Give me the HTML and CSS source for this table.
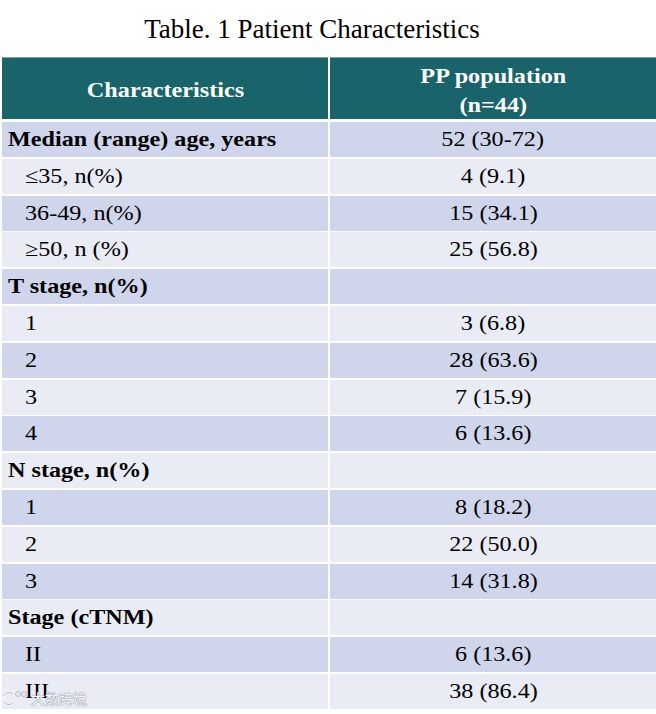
FILE: index.html
```html
<!DOCTYPE html>
<html lang="en">
<head>
<meta charset="utf-8">
<title>Table. 1 Patient Characteristics</title>
<link rel="stylesheet" href="styles.css">
</head>
<body>
<div class="page">
  <h1 class="title">Table. 1 Patient Characteristics</h1>
  <div class="table">
    <div class="head">
      <div class="hcell"><span class="hx">Characteristics</span></div>
      <div class="hcell"><span class="hx">PP population<br>(n=44)</span></div>
    </div>
    <div class="rows">
      <div class="cell dark lab bold"><span class="tx">Median (range) age, years</span></div>
      <div class="cell dark val"><span class="tx">52 (30-72)</span></div>

      <div class="cell light lab sub"><span class="tx">≤35, n(%)</span></div>
      <div class="cell light val"><span class="tx">4 (9.1)</span></div>

      <div class="cell dark lab sub"><span class="tx">36-49, n(%)</span></div>
      <div class="cell dark val"><span class="tx">15 (34.1)</span></div>

      <div class="cell light lab sub"><span class="tx">≥50, n (%)</span></div>
      <div class="cell light val"><span class="tx">25 (56.8)</span></div>

      <div class="cell dark lab bold"><span class="tx">T stage, n(%)</span></div>
      <div class="cell dark val"></div>

      <div class="cell light lab sub"><span class="tx">1</span></div>
      <div class="cell light val"><span class="tx">3 (6.8)</span></div>

      <div class="cell dark lab sub"><span class="tx">2</span></div>
      <div class="cell dark val"><span class="tx">28 (63.6)</span></div>

      <div class="cell light lab sub"><span class="tx">3</span></div>
      <div class="cell light val"><span class="tx">7 (15.9)</span></div>

      <div class="cell dark lab sub"><span class="tx">4</span></div>
      <div class="cell dark val"><span class="tx">6 (13.6)</span></div>

      <div class="cell light lab bold"><span class="tx">N stage, n(%)</span></div>
      <div class="cell light val"></div>

      <div class="cell dark lab sub"><span class="tx">1</span></div>
      <div class="cell dark val"><span class="tx">8 (18.2)</span></div>

      <div class="cell light lab sub"><span class="tx">2</span></div>
      <div class="cell light val"><span class="tx">22 (50.0)</span></div>

      <div class="cell dark lab sub"><span class="tx">3</span></div>
      <div class="cell dark val"><span class="tx">14 (31.8)</span></div>

      <div class="cell light lab bold"><span class="tx">Stage (cTNM)</span></div>
      <div class="cell light val"></div>

      <div class="cell dark lab sub"><span class="tx">II</span></div>
      <div class="cell dark val"><span class="tx">6 (13.6)</span></div>

      <div class="cell light lab sub"><span class="tx">III</span></div>
      <div class="cell light val"><span class="tx">38 (86.4)</span></div>
    </div>
  </div>
  <div class="watermark">
    <svg class="wm-logo" width="26" height="16" viewBox="0 0 26 16" aria-hidden="true">
      <path d="M9 4 A6 6 0 1 0 9 13" fill="none" stroke="#ffffff" stroke-width="2.6"/>
      <path d="M9 4 A6 6 0 1 0 9 13" fill="none" stroke="#a9acb6" stroke-width="1"/>
      <circle cx="14" cy="4" r="2.4" fill="none" stroke="#b6b9c2" stroke-width="1"/>
      <circle cx="20" cy="4" r="2.4" fill="none" stroke="#b6b9c2" stroke-width="1"/>
    </svg>
    <span class="wm-text">大数跨境</span>
  </div>
</div>
</body>
</html>
```
FILE: styles.css
```css
html, body {
  margin: 0;
  padding: 0;
  background: #ffffff;
}

.page {
  position: relative;
  width: 656px;
  height: 714px;
  overflow: hidden;
  font-family: "Liberation Serif", "Times New Roman", serif;
  color: #000000;
}

.title {
  margin: 13px 0 0 0;
  padding-right: 32px;
  height: 32px;
  font-size: 27px;
  line-height: 32px;
  font-weight: normal;
  text-align: center;
}

.table {
  margin: 12px 0 0 2px;
  width: 654px;
}

.head {
  display: grid;
  grid-template-columns: 326px 326px;
  column-gap: 2px;
  height: 62px;
}

.hcell {
  background: #19636a;
  border-top: 1px solid #7e9ea2;
  display: flex;
  align-items: center;
  justify-content: center;
  text-align: center;
  color: #ffffff;
  font-size: 22px;
  font-weight: bold;
  line-height: 29px;
  padding-top: 2px;
  box-sizing: border-box;
}

.hx {
  display: inline-block;
  transform: scaleX(1.1);
}

.rows {
  margin-top: 3px;
  display: grid;
  grid-template-columns: 326px 326px;
  column-gap: 2px;
  row-gap: 1.8px;
  grid-auto-rows: 35px;
}

.cell {
  font-size: 21px;
  line-height: 35px;
  white-space: nowrap;
}

.dark { background: #cfd5ea; }
.light { background: #e9ebf5; }

.lab { padding-left: 6px; }
.lab .tx { transform-origin: left center; }
.sub { padding-left: 23px; }
.bold { font-weight: bold; }

.val { text-align: center; }
.val .tx { transform-origin: center center; }

.tx {
  display: inline-block;
  transform: scaleX(1.15);
}

.watermark {
  position: absolute;
  left: 4px;
  top: 690px;
  display: flex;
  align-items: center;
  gap: 1px;
}

.wm-text {
  font-family: "Noto Sans CJK SC", sans-serif;
  font-size: 14px;
  line-height: 16px;
  color: #f6f7fb;
  text-shadow: 0 0 1px #7d808a, 0 0 1px #7d808a;
}
```
